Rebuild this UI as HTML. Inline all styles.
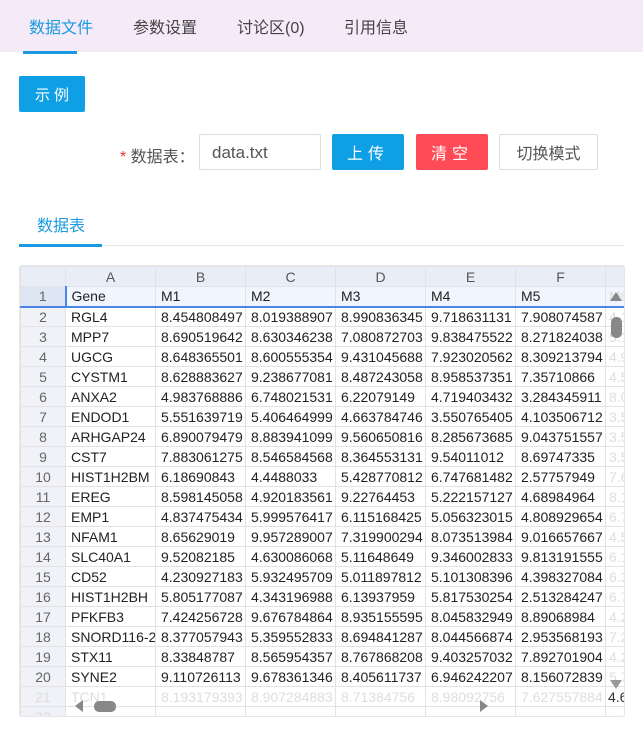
<!DOCTYPE html>
<html><head><meta charset="utf-8"><style>
*{margin:0;padding:0;box-sizing:border-box}
body{width:643px;height:729px;overflow:hidden;background:#fff;font-family:"Liberation Sans","Noto Sans CJK SC",sans-serif;position:relative;color:#333}
.top{position:absolute;left:0;top:0;width:643px;height:52px;background:#f5eaf7}
.tab{position:absolute;top:14px;font-size:16px;color:#444}
.abs{position:absolute}
.btn{position:absolute;display:flex;align-items:center;justify-content:center;font-size:16px;border-radius:2px}
table{border-collapse:collapse;table-layout:fixed;font-size:14px}
td{height:20px;border:1px solid #e3e3e3;padding:0 5px;white-space:nowrap;overflow:hidden;color:#222;line-height:18px}
td.rn{background:#f0f2f7;color:#666;text-align:center;padding:0}
tr.h td{background:#e9edf6;color:#555;text-align:center;border-color:#dde2ec}
tr.s td{background:#f1f5fd;border-bottom:2px solid #4a86e8}
tr.s td.rn{background:#dfe6f3}
td.g{color:#ddd;padding:0 3px}
tr.f td{color:#ddd}
</style></head><body>
<div class="top"></div>
<div class="tab" style="left:29px;color:#1a9ae0">数据文件</div>
<div class="abs" style="left:23px;top:51px;width:54px;height:3px;background:#1a9ae0"></div>
<div class="tab" style="left:133px">参数设置</div>
<div class="tab" style="left:237px">讨论区(0)</div>
<div class="tab" style="left:344px">引用信息</div>

<div class="btn" style="left:19px;top:76px;width:66px;height:36px;background:#0e9fe5;color:#fff;font-size:15px;letter-spacing:4px;padding-left:4px">示例</div>

<div class="abs" style="left:120px;top:143px;font-size:16px;color:#555"><span style="color:#e33">*</span> 数据表：</div>
<div class="abs" style="left:199px;top:134px;width:122px;height:36px;border:1px solid #ddd;border-radius:2px;font-size:17px;color:#555;padding:8px 0 0 12px">data.txt</div>
<div class="btn" style="left:332px;top:134px;width:72px;height:36px;background:#0e9fe5;color:#fff;letter-spacing:5px">上传</div>
<div class="btn" style="left:416px;top:134px;width:72px;height:36px;background:#fe4b55;color:#fff;letter-spacing:5px">清空</div>
<div class="btn" style="left:499px;top:134px;width:99px;height:36px;border:1px solid #ddd;color:#555">切换模式</div>

<div class="abs" style="left:37px;top:212px;font-size:16px;color:#1a9ae0">数据表</div>
<div class="abs" style="left:19px;top:245px;width:605px;height:1px;background:#e6e6e6"></div>
<div class="abs" style="left:19px;top:244px;width:83px;height:3px;background:#1a9ae0"></div>

<div class="abs" style="left:19px;top:265px;width:606px;height:452px;border:1px solid #e6e6e6;border-radius:3px;overflow:hidden">
<table style="width:604px">
<colgroup><col style="width:45px"><col style="width:90px"><col style="width:90px"><col style="width:90px"><col style="width:90px"><col style="width:90px"><col style="width:90px"><col style="width:19px"></colgroup>
<tr class="h"><td></td><td>A</td><td>B</td><td>C</td><td>D</td><td>E</td><td>F</td><td></td></tr>
<tr class="s"><td class="rn">1</td><td style="border-left:2px solid #4a86e8;border-top:1px solid #4a86e8">Gene</td><td>M1</td><td>M2</td><td>M3</td><td>M4</td><td>M5</td><td class="g">M6</td></tr>
<tr><td class="rn">2</td><td>RGL4</td><td>8.454808497</td><td>8.019388907</td><td>8.990836345</td><td>9.718631131</td><td>7.908074587</td><td class="g">4.1</td></tr>
<tr><td class="rn">3</td><td>MPP7</td><td>8.690519642</td><td>8.630346238</td><td>7.080872703</td><td>9.838475522</td><td>8.271824038</td><td class="g">5.1</td></tr>
<tr><td class="rn">4</td><td>UGCG</td><td>8.648365501</td><td>8.600555354</td><td>9.431045688</td><td>7.923020562</td><td>8.309213794</td><td class="g">4.9</td></tr>
<tr><td class="rn">5</td><td>CYSTM1</td><td>8.628883627</td><td>9.238677081</td><td>8.487243058</td><td>8.958537351</td><td>7.35710866</td><td class="g">4.5</td></tr>
<tr><td class="rn">6</td><td>ANXA2</td><td>4.983768886</td><td>6.748021531</td><td>6.22079149</td><td>4.719403432</td><td>3.284345911</td><td class="g">8.0</td></tr>
<tr><td class="rn">7</td><td>ENDOD1</td><td>5.551639719</td><td>5.406464999</td><td>4.663784746</td><td>3.550765405</td><td>4.103506712</td><td class="g">3.5</td></tr>
<tr><td class="rn">8</td><td>ARHGAP24</td><td>6.890079479</td><td>8.883941099</td><td>9.560650816</td><td>8.285673685</td><td>9.043751557</td><td class="g">3.5</td></tr>
<tr><td class="rn">9</td><td>CST7</td><td>7.883061275</td><td>8.546584568</td><td>8.364553131</td><td>9.54011012</td><td>8.69747335</td><td class="g">3.5</td></tr>
<tr><td class="rn">10</td><td>HIST1H2BM</td><td>6.18690843</td><td>4.4488033</td><td>5.428770812</td><td>6.747681482</td><td>2.57757949</td><td class="g">7.6</td></tr>
<tr><td class="rn">11</td><td>EREG</td><td>8.598145058</td><td>4.920183561</td><td>9.22764453</td><td>5.222157127</td><td>4.68984964</td><td class="g">8.1</td></tr>
<tr><td class="rn">12</td><td>EMP1</td><td>4.837475434</td><td>5.999576417</td><td>6.115168425</td><td>5.056323015</td><td>4.808929654</td><td class="g">6.7</td></tr>
<tr><td class="rn">13</td><td>NFAM1</td><td>8.65629019</td><td>9.957289007</td><td>7.319900294</td><td>8.073513984</td><td>9.016657667</td><td class="g">4.5</td></tr>
<tr><td class="rn">14</td><td>SLC40A1</td><td>9.52082185</td><td>4.630086068</td><td>5.11648649</td><td>9.346002833</td><td>9.813191555</td><td class="g">6.1</td></tr>
<tr><td class="rn">15</td><td>CD52</td><td>4.230927183</td><td>5.932495709</td><td>5.011897812</td><td>5.101308396</td><td>4.398327084</td><td class="g">6.3</td></tr>
<tr><td class="rn">16</td><td>HIST1H2BH</td><td>5.805177087</td><td>4.343196988</td><td>6.13937959</td><td>5.817530254</td><td>2.513284247</td><td class="g">6.7</td></tr>
<tr><td class="rn">17</td><td>PFKFB3</td><td>7.424256728</td><td>9.676784864</td><td>8.935155595</td><td>8.045832949</td><td>8.89068984</td><td class="g">4.2</td></tr>
<tr><td class="rn">18</td><td>SNORD116-2</td><td>8.377057943</td><td>5.359552833</td><td>8.694841287</td><td>8.044566874</td><td>2.953568193</td><td class="g">7.2</td></tr>
<tr><td class="rn">19</td><td>STX11</td><td>8.33848787</td><td>8.565954357</td><td>8.767868208</td><td>9.403257032</td><td>7.892701904</td><td class="g">4.2</td></tr>
<tr><td class="rn">20</td><td>SYNE2</td><td>9.110726113</td><td>9.678361346</td><td>8.405611737</td><td>6.946242207</td><td>8.156072839</td><td class="g">5.7</td></tr>
<tr class="f"><td class="rn">21</td><td>TCN1</td><td>8.193179393</td><td>8.907284883</td><td>8.71384756</td><td>8.98092756</td><td>7.627557884</td><td style="color:#333;padding:0 2px">4.6</td></tr>
<tr class="f"><td class="rn">22</td><td></td><td></td><td></td><td></td><td></td><td></td><td></td></tr>
</table>
<div class="abs" style="left:590px;top:26px;width:0;height:0;border-left:6px solid transparent;border-right:6px solid transparent;border-bottom:9px solid #888"></div>
<div class="abs" style="left:591px;top:51px;width:11px;height:21px;border-radius:5px;background:#888"></div>
<div class="abs" style="left:590px;top:414px;width:0;height:0;border-left:6px solid transparent;border-right:6px solid transparent;border-top:9px solid #999"></div>
<div class="abs" style="left:55px;top:434px;width:0;height:0;border-top:6px solid transparent;border-bottom:6px solid transparent;border-right:8px solid #888"></div>
<div class="abs" style="left:74px;top:435px;width:22px;height:11px;border-radius:5px;background:#888"></div>
<div class="abs" style="left:460px;top:434px;width:0;height:0;border-top:6px solid transparent;border-bottom:6px solid transparent;border-left:8px solid #888"></div>
</div>
</body></html>
